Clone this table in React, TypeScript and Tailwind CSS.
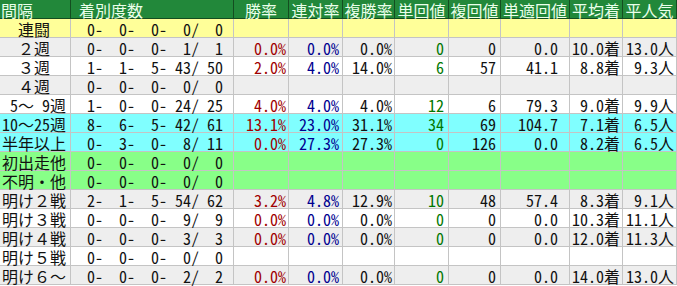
import React from "react";

type Row = {
  label: string;
  bg: string;
  rec: string[];
  vals?: string[];
};

const rows: Row[] = [
  { label: "　連闘", bg: "bg-[#ffff99]", rec: ["0-", "0-", "0-", "0/", "0"] },
  { label: "　２週", bg: "bg-[#eeeeee]", rec: ["0-", "0-", "0-", "1/", "1"], vals: ["0.0%", "0.0%", "0.0%", "0", "0", "0.0", "10.0着", "13.0人"] },
  { label: "　３週", bg: "bg-white", rec: ["1-", "1-", "5-", "43/", "50"], vals: ["2.0%", "4.0%", "14.0%", "6", "57", "41.1", "8.8着", "9.3人"] },
  { label: "　４週", bg: "bg-[#eeeeee]", rec: ["0-", "0-", "0-", "0/", "0"] },
  { label: " 5～ 9週", bg: "bg-white", rec: ["1-", "0-", "0-", "24/", "25"], vals: ["4.0%", "4.0%", "4.0%", "12", "6", "79.3", "9.0着", "9.9人"] },
  { label: "10～25週", bg: "bg-[#80ffff]", rec: ["8-", "6-", "5-", "42/", "61"], vals: ["13.1%", "23.0%", "31.1%", "34", "69", "104.7", "7.1着", "6.5人"] },
  { label: "半年以上", bg: "bg-[#80ffff]", rec: ["0-", "3-", "0-", "8/", "11"], vals: ["0.0%", "27.3%", "27.3%", "0", "126", "0.0", "8.2着", "6.5人"] },
  { label: "初出走他", bg: "bg-[#88ff88]", rec: ["0-", "0-", "0-", "0/", "0"] },
  { label: "不明・他", bg: "bg-[#88ff88]", rec: ["0-", "0-", "0-", "0/", "0"] },
  { label: "明け２戦", bg: "bg-[#eeeeee]", rec: ["2-", "1-", "5-", "54/", "62"], vals: ["3.2%", "4.8%", "12.9%", "10", "48", "57.4", "8.3着", "9.1人"] },
  { label: "明け３戦", bg: "bg-white", rec: ["0-", "0-", "0-", "9/", "9"], vals: ["0.0%", "0.0%", "0.0%", "0", "0", "0.0", "10.3着", "11.1人"] },
  { label: "明け４戦", bg: "bg-[#eeeeee]", rec: ["0-", "0-", "0-", "3/", "3"], vals: ["0.0%", "0.0%", "0.0%", "0", "0", "0.0", "12.0着", "11.3人"] },
  { label: "明け５戦", bg: "bg-white", rec: ["0-", "0-", "0-", "0/", "0"] },
  { label: "明け６～", bg: "bg-[#eeeeee]", rec: ["0-", "0-", "0-", "2/", "2"], vals: ["0.0%", "0.0%", "0.0%", "0", "0", "0.0", "14.0着", "13.0人"] },
];

const headers = ["勝率", "連対率", "複勝率", "単回値", "複回値", "単適回値", "平均着", "平人気"];

// text colour + right padding per value column
const valCls = [
  "text-[#a00000] pr-[2px]",
  "text-[#000090] pr-[3px]",
  "text-[#111111] pr-[2px]",
  "text-[#007700] pr-[4px]",
  "text-[#111111] pr-[4px]",
  "text-[#111111] pr-[11px]",
  "text-[#111111] pr-[2px]",
  "text-[#111111] pr-[2px]",
];

const cell = "h-[19px] pt-px border-r border-b border-[#c4c4c4] leading-[18px] whitespace-pre";
const head = "h-[19px] pt-px bg-[#22883a] text-[#eaffea] border-r border-b border-[#144d20] leading-[18px] whitespace-pre";

export default function App() {
  return (
    <div
      className="w-[677px] h-[286px] bg-white text-[16px]"
      style={{ fontFamily: '"Noto Sans Mono CJK JP", "Noto Sans CJK JP", sans-serif' }}
    >
      <div className="grid grid-cols-[71px_163px_55px_54px_52px_54px_52px_69px_53px_54px]">
        {/* header */}
        <div className={`${head} pl-px`}>間隔</div>
        <div className={`${head} pl-[8px]`}>着別度数</div>
        {headers.map((h) => (
          <div key={h} className={`${head} text-center`}>
            {h}
          </div>
        ))}

        {rows.map((r) => (
          <React.Fragment key={r.label}>
            <div className={`${cell} ${r.bg} text-[#111111] pl-[2px]`}>{r.label}</div>
            <div className={`${cell} ${r.bg} text-[#111111] flex`}>
              {r.rec.map((s, i) => (
                <span key={i} className={`block text-right ${i === 4 ? "w-[24px]" : "w-[32px]"}`}>
                  {s}
                </span>
              ))}
            </div>
            {valCls.map((c, i) => (
              <div key={i} className={`${cell} ${r.bg} text-right ${c}`}>
                {r.vals ? r.vals[i] : ""}
              </div>
            ))}
          </React.Fragment>
        ))}
      </div>
    </div>
  );
}
